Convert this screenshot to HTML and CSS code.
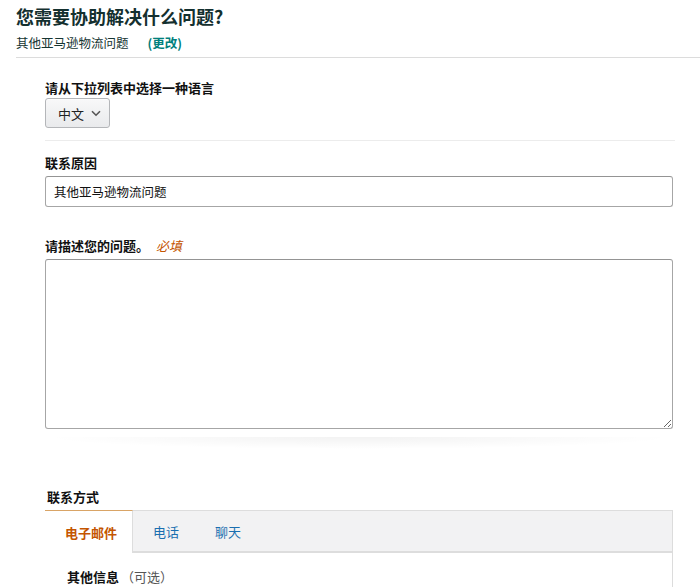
FILE: index.html
```html
<!DOCTYPE html>
<html lang="zh-CN">
<head>
<meta charset="utf-8">
<title>联系我们</title>
<link rel="stylesheet" href="styles.css">
</head>
<body>
<div class="header">
  <h1 class="title">您需要协助解决什么问题?</h1>
  <div class="sub">其他亚马逊物流问题<a class="change" href="#">(更改)</a></div>
</div>
<div class="rule"></div>
<div class="form">
  <div class="label lang-label">请从下拉列表中选择一种语言</div>
  <div class="select">
    <span>中文</span>
    <svg class="chev" width="10" height="7" viewBox="0 0 10 7"><path d="M1 1.2 L5 5.2 L9 1.2" fill="none" stroke="#555" stroke-width="1.6"/></svg>
  </div>
  <div class="divider"></div>
  <div class="label reason-label">联系原因</div>
  <input class="field" type="text" value="其他亚马逊物流问题">
  <div class="label desc-label">请描述您的问题。<span class="req">必填</span></div>
  <textarea class="area"></textarea>
  <div class="break"></div>
  <div class="label method-label">联系方式</div>
  <div class="tabs">
    <div class="tab-bar">
      <div class="tab active">电子邮件</div>
      <div class="tab">电话</div>
      <div class="tab">聊天</div>
    </div>
    <div class="tab-body">
      <span class="info">其他信息</span><span class="opt">（可选）</span>
    </div>
  </div>
</div>
</body>
</html>
```
FILE: styles.css
```css
html, body {
  margin: 0;
  padding: 0;
  background: #fff;
}
body {
  font-family: "Noto Sans CJK SC", "Liberation Sans", sans-serif;
  color: #111;
  overflow: hidden;
}
.header {
  padding: 5px 16px 0;
}
.title {
  margin: 0;
  font-size: 18px;
  line-height: 22px;
  font-weight: 700;
  color: #14302f;
}
.sub {
  margin-top: 7px;
  font-size: 12.5px;
  line-height: 18px;
  color: #163532;
}
.change {
  margin-left: 19px;
  color: #00807c;
  font-weight: 700;
  text-decoration: none;
}
.rule {
  margin: 5px 0 0 16px;
  border-top: 1px solid #dcdcdc;
}
.form {
  padding-left: 45px;
  width: 628px;
}
.label {
  font-size: 13px;
  line-height: 18px;
  font-weight: 700;
  color: #111;
}
.lang-label { margin-top: 21px; }
.select {
  margin-top: 1px;
  box-sizing: border-box;
  width: 65px;
  height: 30px;
  display: flex;
  align-items: center;
  gap: 7px;
  padding-left: 12px;
  border: 1px solid #b4b6b9;
  border-radius: 3px;
  background: linear-gradient(#f8f8f9, #e9eaec);
  box-shadow: 0 1px 0 rgba(255,255,255,0.6) inset;
  font-size: 13px;
  color: #222;
}
.chev { margin-top: 1px; }
.divider {
  margin-top: 12px;
  width: 630px;
  border-top: 1px solid #ececec;
}
.reason-label { margin-top: 13px; }
.field {
  display: block;
  margin-top: 4px;
  box-sizing: border-box;
  width: 628px;
  height: 31px;
  padding: 0 8px;
  border: 1px solid #a6a6a6;
  border-top-color: #949494;
  border-radius: 3px;
  font-family: "Noto Sans CJK SC", "Liberation Sans", sans-serif;
  font-size: 12.5px;
  color: #111;
  outline: none;
}
.desc-label { margin-top: 30px; }
.req {
  margin-left: 7px;
  color: #c45500;
  font-style: italic;
  font-weight: 400;
}
.area {
  display: block;
  margin-top: 4px;
  box-sizing: border-box;
  width: 628px;
  height: 170px;
  border: 1px solid #a6a6a6;
  border-top-color: #949494;
  border-radius: 3px;
  outline: none;
}
.break {
  margin-top: 8px;
  height: 12px;
  width: 628px;
  background: radial-gradient(ellipse 50% 100% at 50% 0, rgba(0,0,0,0.05), rgba(0,0,0,0));
}
.method-label { margin-top: 39px; padding-left: 2px; }
.tabs {
  margin-top: 4px;
  box-sizing: border-box;
  width: 628px;
  border-right: 1px solid #dcdcdc;
}
.tab-bar {
  display: flex;
  height: 43px;
  box-sizing: border-box;
  background: #f2f2f3;
  border-top: 1px solid #dddddd;
  border-bottom: 2px solid #dddddd;
}
.tab {
  display: flex;
  align-items: center;
  white-space: nowrap;
  padding: 0 16px 0 20px;
  font-size: 13px;
  color: #1a6fb0;
}
.tab.active {
  width: 88px;
  flex: none;
  box-sizing: border-box;
  padding: 0 0 0 20px;
  margin-top: -1px;
  margin-bottom: -2px;
  border-top: 1px solid #d9a466;
  border-right: 1px solid #dddddd;
  background: #fff;
  color: #c45500;
  font-weight: 700;
}
.tab-body {
  padding: 15px 0 0 22px;
  height: 40px;
  font-size: 13px;
  line-height: 18px;
}
.info { font-weight: 700; }
.opt { color: #555; margin-left: 2px; }
```
